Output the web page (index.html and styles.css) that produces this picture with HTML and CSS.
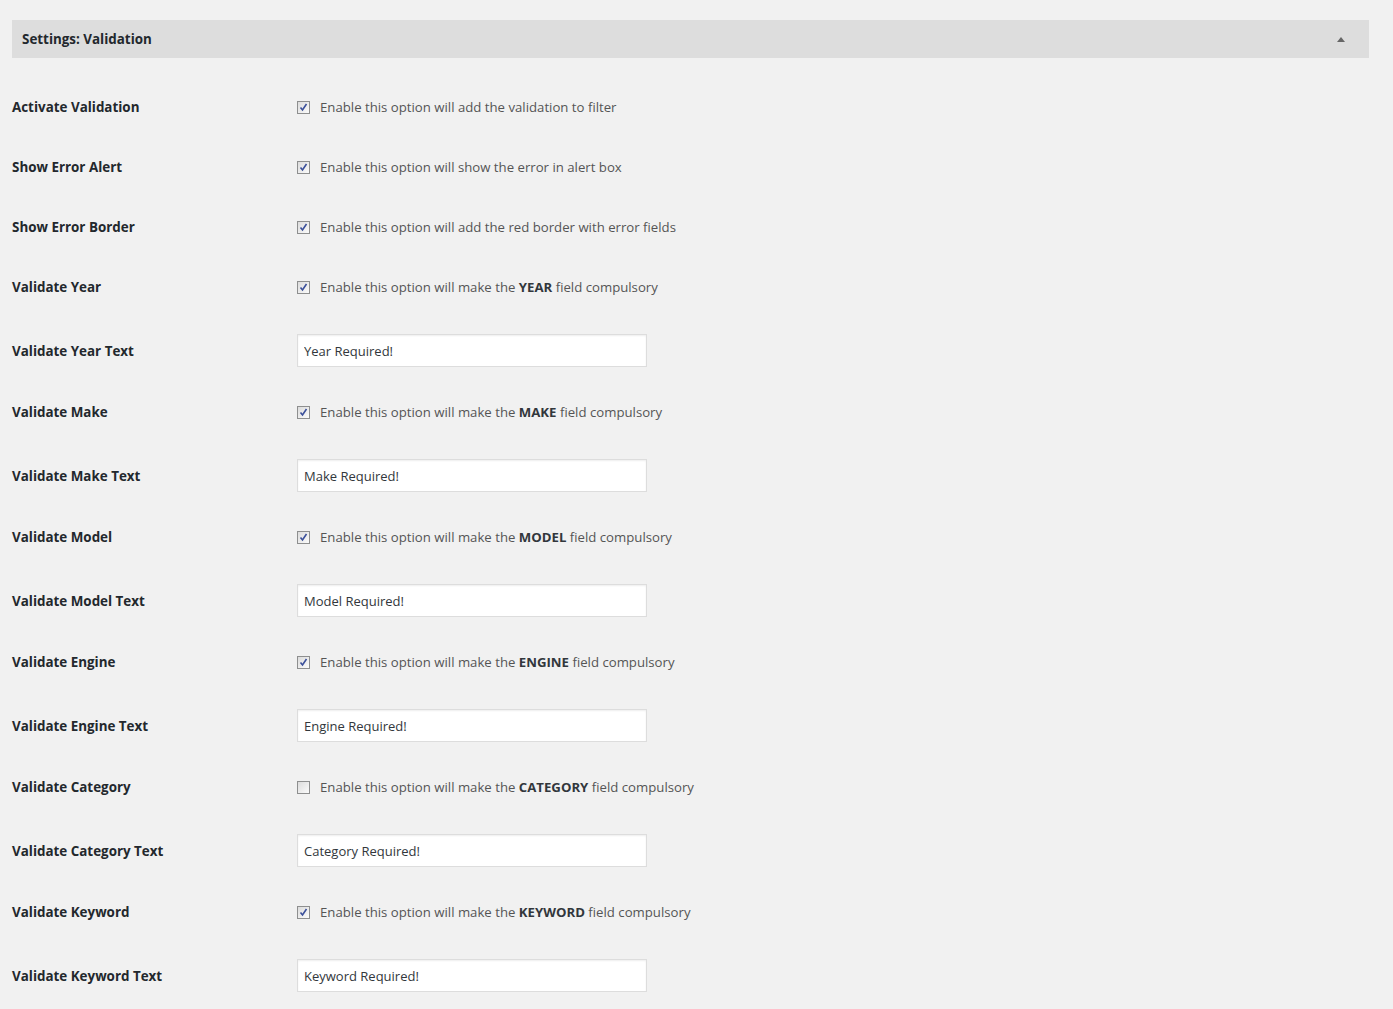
FILE: index.html
```html
<!DOCTYPE html>
<html lang="en">
  <head>
    <meta charset="UTF-8" />
    <title>Settings: Validation</title>
    <link rel="stylesheet" href="styles.css">
  </head>
  <body>
    <div class="wrap">
      <div class="panel-head">
        <h2 class="panel-title">Settings: Validation</h2>
        <span class="toggle-arrow"></span>
      </div>

      <div class="form-table">
        <div class="form-row">
          <div class="row-label">Activate Validation</div>
          <label class="row-field"><input type="checkbox" checked /><span>Enable this option will add the validation to filter</span></label>
        </div>
        <div class="form-row">
          <div class="row-label">Show Error Alert</div>
          <label class="row-field"><input type="checkbox" checked /><span>Enable this option will show the error in alert box</span></label>
        </div>
        <div class="form-row">
          <div class="row-label">Show Error Border</div>
          <label class="row-field"><input type="checkbox" checked /><span>Enable this option will add the red border with error fields</span></label>
        </div>
        <div class="form-row">
          <div class="row-label">Validate Year</div>
          <label class="row-field"><input type="checkbox" checked /><span>Enable this option will make the <b>YEAR</b> field compulsory</span></label>
        </div>
        <div class="form-row text-row">
          <div class="row-label">Validate Year Text</div>
          <input class="regular-text" type="text" value="Year Required!" />
        </div>
        <div class="form-row">
          <div class="row-label">Validate Make</div>
          <label class="row-field"><input type="checkbox" checked /><span>Enable this option will make the <b>MAKE</b> field compulsory</span></label>
        </div>
        <div class="form-row text-row">
          <div class="row-label">Validate Make Text</div>
          <input class="regular-text" type="text" value="Make Required!" />
        </div>
        <div class="form-row">
          <div class="row-label">Validate Model</div>
          <label class="row-field"><input type="checkbox" checked /><span>Enable this option will make the <b>MODEL</b> field compulsory</span></label>
        </div>
        <div class="form-row text-row">
          <div class="row-label">Validate Model Text</div>
          <input class="regular-text" type="text" value="Model Required!" />
        </div>
        <div class="form-row">
          <div class="row-label">Validate Engine</div>
          <label class="row-field"><input type="checkbox" checked /><span>Enable this option will make the <b>ENGINE</b> field compulsory</span></label>
        </div>
        <div class="form-row text-row">
          <div class="row-label">Validate Engine Text</div>
          <input class="regular-text" type="text" value="Engine Required!" />
        </div>
        <div class="form-row">
          <div class="row-label">Validate Category</div>
          <label class="row-field"><input type="checkbox" /><span>Enable this option will make the <b>CATEGORY</b> field compulsory</span></label>
        </div>
        <div class="form-row text-row">
          <div class="row-label">Validate Category Text</div>
          <input class="regular-text" type="text" value="Category Required!" />
        </div>
        <div class="form-row">
          <div class="row-label">Validate Keyword</div>
          <label class="row-field"><input type="checkbox" checked /><span>Enable this option will make the <b>KEYWORD</b> field compulsory</span></label>
        </div>
        <div class="form-row text-row">
          <div class="row-label">Validate Keyword Text</div>
          <input class="regular-text" type="text" value="Keyword Required!" />
        </div>
      </div>
    </div>
  </body>
</html>
```

FILE: styles.css
```css
* {
  box-sizing: border-box;
}

html,
body {
  background-color: #f1f1f1;
  color: #444;
  font-family: "Open Sans", "Noto Sans", sans-serif;
  font-size: 13px;
  margin: 0;
}

.wrap {
  padding: 20px 24px 0 12px;
}

.panel-head {
  align-items: center;
  background-color: #dddddd;
  display: flex;
  height: 38px;
  justify-content: space-between;
  padding: 0 24px 0 10px;
}

.panel-title {
  color: #23282d;
  font-size: 13.4px;
  font-weight: 700;
  margin: 0;
}

.toggle-arrow {
  border-bottom: 5px solid #666;
  border-left: 4px solid transparent;
  border-right: 4px solid transparent;
  height: 0;
  width: 0;
}

.form-table {
  display: flex;
  flex-direction: column;
  padding-top: 19px;
}

.form-row {
  align-items: center;
  display: flex;
  min-height: 60px;
}

.text-row {
  min-height: 65px;
  padding-top: 2px;
}

.row-label {
  color: #23282d;
  flex: 0 0 285px;
  font-size: 13.4px;
  font-weight: 700;
}

.row-field {
  align-items: center;
  color: #555;
  display: flex;
  font-size: 13.2px;
  gap: 10px;
  white-space: nowrap;
}

.row-field b {
  color: #32373c;
}

input[type="checkbox"] {
  appearance: none;
  background: linear-gradient(135deg, #dcdcdc, #fbfbfb);
  border: 1px solid #8e8f8f;
  height: 13px;
  margin: 0;
  width: 13px;
}

input[type="checkbox"]:checked {
  background-image: url("data:image/svg+xml;utf8,<svg xmlns='http://www.w3.org/2000/svg' viewBox='0 0 11 11'><path d='M2.5 5.5 L4.5 8 L8.5 2' fill='none' stroke='%233a4f9a' stroke-width='1.6'/></svg>"), linear-gradient(135deg, #dcdcdc, #fbfbfb);
}

.regular-text {
  background-color: #fff;
  border: 1px solid #ddd;
  box-shadow: inset 0 1px 2px rgba(0, 0, 0, 0.07);
  color: #32373c;
  font-family: inherit;
  font-size: 13px;
  height: 33px;
  padding: 0 6px;
  width: 350px;
}
```
